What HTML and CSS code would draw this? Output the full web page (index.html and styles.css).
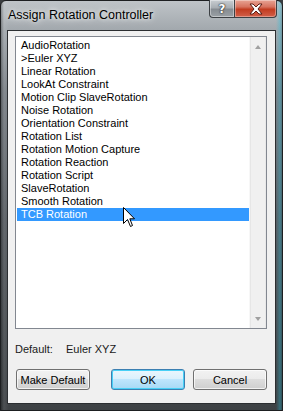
FILE: index.html
```html
<!DOCTYPE html>
<html>
<head>
<meta charset="utf-8">
<link rel="stylesheet" href="styles.css">
</head>
<body>
<div class="window">
  <div class="titlebar">
    <div class="title">Assign Rotation Controller</div>
    <div class="caption-buttons">
      <div class="cap-btn help"><span>?</span></div>
      <div class="cap-btn close">
        <svg width="16" height="12" viewBox="0 0 16 12"><path d="M2 1 L5 1 L8 4 L11 1 L14 1 L10 6 L14 11 L11 11 L8 8 L5 11 L2 11 L6 6 Z" fill="#fff" stroke="#5a1d14" stroke-width="1" stroke-linejoin="round"/></svg>
      </div>
    </div>
  </div>
  <div class="client">
    <div class="listbox">
      <ul class="items">
        <li>AudioRotation</li>
        <li>&gt;Euler XYZ</li>
        <li>Linear Rotation</li>
        <li>LookAt Constraint</li>
        <li>Motion Clip SlaveRotation</li>
        <li>Noise Rotation</li>
        <li>Orientation Constraint</li>
        <li>Rotation List</li>
        <li>Rotation Motion Capture</li>
        <li>Rotation Reaction</li>
        <li>Rotation Script</li>
        <li>SlaveRotation</li>
        <li>Smooth Rotation</li>
        <li class="selected">TCB Rotation</li>
      </ul>
      <div class="scrollbar">
        <div class="arrow up"></div>
        <div class="arrow down"></div>
      </div>
    </div>
    <div class="default-row">
      <span class="label">Default:</span>
      <span class="value">Euler XYZ</span>
    </div>
    <div class="button-row">
      <button class="btn">Make Default</button>
      <div class="right-buttons">
        <button class="btn default">OK</button>
        <button class="btn">Cancel</button>
      </div>
    </div>
  </div>
  <svg class="cursor" width="13" height="21" viewBox="0 0 13 21"><path d="M0.5 0.5 L0.5 16.5 L4.5 12.5 L7.5 19.5 L9.5 18.5 L6.8 11.8 L11.5 11.8 Z" fill="#fff" stroke="#000" stroke-width="1" stroke-linejoin="miter"/></svg>
</div>
</body>
</html>
```
FILE: styles.css
```css
* { box-sizing: border-box; }
html, body { margin: 0; padding: 0; background: #3a3d40; }
body { width: 283px; height: 411px; overflow: hidden; }

.window {
  position: relative;
  width: 283px;
  height: 411px;
  display: flex;
  flex-direction: column;
  border: 1px solid #1d1f21;
  border-radius: 6px 6px 0 0;
  background:
    linear-gradient(90deg, rgba(0,0,0,0.25) 0, rgba(255,255,255,0.08) 3px, rgba(0,0,0,0) 8px, rgba(0,0,0,0) 275px, rgba(40,190,220,0.35) 279px, rgba(0,0,0,0.3) 283px),
    linear-gradient(180deg, #bfc4c8 0, #a3a9ae 28px, #7b8187 90px, #585d62 220px, #3d4144 411px);
  font-family: "Liberation Sans", Arial, sans-serif;
  font-size: 11px;
  color: #000;
}

.titlebar {
  height: 29px;
  display: flex;
  justify-content: space-between;
  align-items: flex-start;
  padding-left: 7px;
  padding-right: 5px;
}
.title {
  font-size: 12.5px;
  color: #000;
  padding-top: 6px;
  line-height: 16px;
  text-shadow: 0 0 8px rgba(255,255,255,0.9), 0 0 4px rgba(255,255,255,0.8);
}
.caption-buttons {
  display: flex;
  margin-top: -1px;
}
.cap-btn {
  height: 18px;
  display: flex;
  align-items: center;
  justify-content: center;
  border: 1px solid #3c4044;
  border-top: none;
}
.help {
  width: 25px;
  border-radius: 0 0 0 4px;
  border-right: none;
  background: linear-gradient(180deg, #c9ced2 0, #a8aeb3 45%, #868c92 55%, #9aa0a5 100%);
  box-shadow: inset 0 0 0 1px rgba(255,255,255,0.4);
}
.help span {
  font-family: "DejaVu Sans", sans-serif;
  font-weight: bold;
  font-size: 12px;
  color: #fff;
  text-shadow: 0 0 1px #333, 0 0 1px #333, 0 0 2px #333;
}
.close {
  width: 43px;
  border-radius: 0 0 4px 0;
  background: linear-gradient(180deg, #e8a494 0, #d7735f 40%, #c23c20 55%, #d2604a 100%);
  box-shadow: inset 0 0 0 1px rgba(255,255,255,0.35);
}

.client {
  flex: 1;
  margin: 0 6px 6px 6px;
  border: 1px solid #2b2e31;
  background: #f0f0f0;
  padding: 5px 7px 0 7px;
  display: flex;
  flex-direction: column;
}

.listbox {
  height: 293px;
  width: 252px;
  border: 1px solid #828790;
  background: #fff;
  display: flex;
}
.items {
  list-style: none;
  margin: 0;
  padding: 2px 0 0 1px;
  flex: 1;
}
.items li {
  height: 13px;
  line-height: 13px;
  padding-left: 4px;
  white-space: nowrap;
  color: #000;
}
.items li.selected {
  background: #3399ff;
  color: #fff;
}

.scrollbar {
  width: 17px;
  background: #f0f0f0;
  border-left: 1px solid #f7f7f7;
  display: flex;
  flex-direction: column;
  justify-content: space-between;
  padding: 8px 0 7px 0;
  align-items: center;
  box-shadow: inset 1px 0 0 #e6e6e6, inset -1px 0 0 #e8e8e8;
}
.arrow {
  width: 0; height: 0;
  border-left: 3.5px solid transparent;
  border-right: 3.5px solid transparent;
}
.arrow.up { border-bottom: 4px solid #a0a0a0; }
.arrow.down { border-top: 4px solid #a0a0a0; }

.default-row {
  display: flex;
  margin-top: 14px;
  height: 13px;
  line-height: 13px;
  color: #1a1a1a;
}
.default-row .label { width: 51px; }

.button-row {
  display: flex;
  justify-content: space-between;
  margin-top: 13px;
  width: 252px;
  padding-left: 1px;
}
.right-buttons {
  display: flex;
  gap: 8px;
}
.btn {
  width: 74px;
  height: 21px;
  padding: 0;
  font-family: "Liberation Sans", Arial, sans-serif;
  font-size: 11px;
  color: #000;
  border: 1px solid #707070;
  border-radius: 3px;
  background: linear-gradient(180deg, #f2f2f2 0, #ebebeb 50%, #dddddd 50%, #cfcfcf 100%);
  box-shadow: inset 0 0 0 1px rgba(255,255,255,0.7);
}
.btn.default {
  border-color: #3c7fb1;
  background: linear-gradient(180deg, #eaf6fd 0, #d9f0fc 50%, #bee6fd 50%, #a7d9f5 100%);
  box-shadow: inset 0 0 0 1px #48d0f6;
}

.cursor {
  position: absolute;
  left: 122px;
  top: 206px;
}
```
